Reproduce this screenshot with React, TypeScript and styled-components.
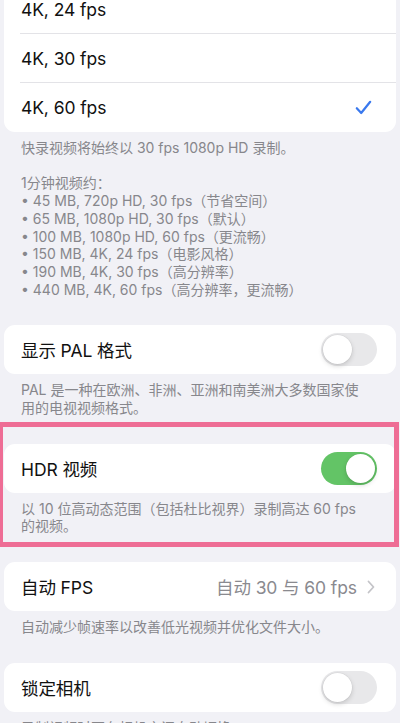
import React from "react";
import styled, { createGlobalStyle } from "styled-components";

const GlobalStyle = createGlobalStyle`
  html, body {
    margin: 0;
    padding: 0;
    background: #f1f1f6;
    overflow: hidden;
  }
  body {
    font-family: Inter, "Noto Sans CJK SC", sans-serif;
    -webkit-font-smoothing: antialiased;
  }
`;

const Page = styled.div`
  width: 400px;
  height: 723px;
  overflow: hidden;
  padding: 0 4px;
  box-sizing: border-box;
  display: flex;
  flex-direction: column;
  gap: 27px;
`;

const Section = styled.div<{ $offset?: number }>`
  display: flex;
  flex-direction: column;
  margin-top: ${(p) => (p.$offset ? `${p.$offset}px` : "0")};
`;

const Highlight = styled.div`
  position: relative;

  &::after {
    content: "";
    position: absolute;
    top: -22px;
    bottom: -12px;
    left: -6px;
    right: -3px;
    border: 5px solid #ee6d95;
    pointer-events: none;
  }
`;

const Card = styled.div`
  background: #ffffff;
  border-radius: 11px;
  overflow: hidden;
`;

const Row = styled.div<{ $divider?: boolean }>`
  height: 49px;
  display: flex;
  align-items: center;
  padding: 0 19px 0 17px;
  position: relative;
  font-size: 17.5px;
  color: #111111;
  letter-spacing: -0.1px;

  ${(p) =>
    p.$divider &&
    `
    &::after {
      content: "";
      position: absolute;
      left: 16px;
      right: 0;
      bottom: 0;
      height: 1px;
      background: #e3e3e7;
    }
  `}
`;

const Label = styled.span`
  flex: 1;
`;

const Value = styled.span`
  color: #8a8a8f;
  margin-right: 10px;
`;

const Chevron = styled.svg`
  width: 8px;
  height: 14px;
  margin-right: 2px;
`;

const Check = styled.svg`
  width: 17px;
  height: 15px;
  margin-right: 5px;
`;

const Track = styled.div<{ $on?: boolean }>`
  width: 56px;
  height: 33px;
  border-radius: 17px;
  background: ${(p) => (p.$on ? "#63c466" : "#e8e8ea")};
  display: flex;
  align-items: center;
  justify-content: ${(p) => (p.$on ? "flex-end" : "flex-start")};
  padding: 2px;
  box-sizing: border-box;
`;

const Knob = styled.div`
  width: 29px;
  height: 29px;
  border-radius: 50%;
  background: #ffffff;
  box-shadow: 0 2px 5px rgba(0, 0, 0, 0.16), 0 0 0 0.5px rgba(0, 0, 0, 0.06);
`;

const Footer = styled.div`
  padding: 7px 17px 0 17px;
  font-size: 14px;
  line-height: 17.7px;
  color: #87878c;
`;

const Line = styled.div`
  white-space: pre;
`;

const Toggle = ({ on }: { on?: boolean }) => (
  <Track $on={on}>
    <Knob />
  </Track>
);

const sizes = [
  "• 45 MB, 720p HD, 30 fps（节省空间）",
  "• 65 MB, 1080p HD, 30 fps（默认）",
  "• 100 MB, 1080p HD, 60 fps（更流畅）",
  "• 150 MB, 4K, 24 fps（电影风格）",
  "• 190 MB, 4K, 30 fps（高分辨率）",
  "• 440 MB, 4K, 60 fps（高分辨率，更流畅）",
];

export default function App() {
  return (
    <>
      <GlobalStyle />
      <Page>
        <Section $offset={-15}>
          <Card>
            <Row $divider>
              <Label>4K, 24 fps</Label>
            </Row>
            <Row $divider>
              <Label>4K, 30 fps</Label>
            </Row>
            <Row>
              <Label>4K, 60 fps</Label>
              <Check viewBox="0 0 17 15">
                <path
                  d="M1.8 8.2 L6.2 13 L15.2 1.8"
                  fill="none"
                  stroke="#3a79ee"
                  strokeWidth="2.2"
                  strokeLinecap="round"
                  strokeLinejoin="round"
                />
              </Check>
            </Row>
          </Card>
          <Footer>
            <Line>快录视频将始终以 30 fps 1080p HD 录制。</Line>
            <Line> </Line>
            <Line>1分钟视频约：</Line>
            {sizes.map((s) => (
              <Line key={s}>{s}</Line>
            ))}
          </Footer>
        </Section>

        <Section>
          <Card>
            <Row>
              <Label>显示 PAL 格式</Label>
              <Toggle />
            </Row>
          </Card>
          <Footer>
            <Line>PAL 是一种在欧洲、非洲、亚洲和南美洲大多数国家使</Line>
            <Line>用的电视视频格式。</Line>
          </Footer>
        </Section>

        <Highlight>
          <Section>
            <Card>
              <Row>
                <Label>HDR 视频</Label>
                <Toggle on />
              </Row>
            </Card>
            <Footer>
              <Line>以 10 位高动态范围（包括杜比视界）录制高达 60 fps</Line>
              <Line>的视频。</Line>
            </Footer>
          </Section>
        </Highlight>

        <Section>
          <Card>
            <Row>
              <Label>自动 FPS</Label>
              <Value>自动 30 与 60 fps</Value>
              <Chevron viewBox="0 0 8 14">
                <path
                  d="M1.5 1.5 L6.5 7 L1.5 12.5"
                  fill="none"
                  stroke="#c4c4c8"
                  strokeWidth="1.8"
                  strokeLinecap="round"
                  strokeLinejoin="round"
                />
              </Chevron>
            </Row>
          </Card>
          <Footer>自动减少帧速率以改善低光视频并优化文件大小。</Footer>
        </Section>

        <Section>
          <Card>
            <Row>
              <Label>锁定相机</Label>
              <Toggle />
            </Row>
          </Card>
          <Footer>录制视频时不在相机之间自动切换。</Footer>
        </Section>
      </Page>
    </>
  );
}
